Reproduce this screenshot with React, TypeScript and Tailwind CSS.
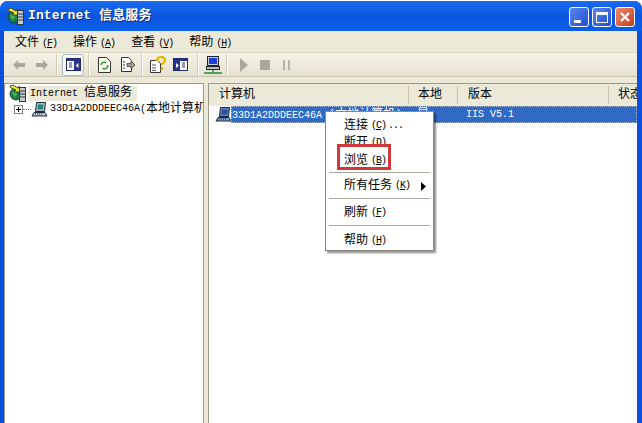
const cjk = "font-['Liberation_Mono','Noto_Sans_CJK_SC',monospace]"

const ServicesIcon = ({ size = 18 }: { size?: number }) => (
  <svg width={size} height={size} viewBox="0 0 18 18" className="shrink-0">
    <circle cx="7" cy="10" r="6" fill="#1f7d4a" stroke="#12331f" strokeWidth="0.8" />
    <path d="M3 8l4-1 1 4-3 2z" fill="#49b45c" />
    <path d="M1 2l3-1 5 3 1-2 1 6-6 0 2-2-5-2z" fill="#e6e832" stroke="#26301a" strokeWidth="0.8" />
    <rect x="10.500" y="3.500" width="6" height="14" fill="#c8ccd2" stroke="#30343c" />
    <path d="M11 7h5M11 10h5M11 13h5" stroke="#30343c" strokeWidth="1.200" />
  </svg>
)

const ComputerIcon = ({ selected }: { selected?: boolean }) => (
  <svg width="17" height="17" viewBox="0 0 17 17" className="shrink-0">
    <path d="M5.500 1.500h9l-1 9h-9z" fill={selected ? "#5f84c4" : "#b6bcc4"} stroke="#1a2438" />
    <path d="M7 3.500h5.500l-.6 5H6.500z" fill={selected ? "#2a4f9c" : "#1d8a7c"} />
    <path d="M3 11.500h11l2 3.500H1z" fill={selected ? "#7f9cd0" : "#c2c6cc"} stroke="#1a2438" />
    <path d="M4 13h8" stroke="#1a2438" strokeDasharray="1 1" />
  </svg>
)

const NetComputerIcon = () => (
  <svg width="20" height="20" viewBox="0 0 20 20" className="ml-[4px] shrink-0">
    <rect x="4.500" y="1.500" width="11" height="9" fill="#c8ccd4" stroke="#20242c" />
    <rect x="6" y="3" width="8" height="6" fill="#1f3fd8" />
    <rect x="3.500" y="11.500" width="13" height="3" fill="#b8bcc4" stroke="#20242c" />
    <path d="M10 15v3M1 18h18" stroke="#2a8a3c" strokeWidth="1.400" />
  </svg>
)

const ToolSep = ({ className }: { className: string }) => (
  <div className={`w-[2px] h-[22px] shrink-0 bg-[#d0ccb8] border-r border-white ${className}`} />
)

const Arrow = ({ left, className }: { left?: boolean; className?: string }) => (
  <svg width="14" height="12" viewBox="0 0 14 12" className={`shrink-0 ${left ? "" : "-scale-x-100"} ${className ?? ""}`}>
    <path d="M1 6l5-5v3h7v4H6v3z" fill="#a9a99a" />
  </svg>
)

const Hot = ({ k }: { k: string }) => (
  <span className="ml-[3px] text-[10px] tracking-[-1px]">(<u>{k}</u>)</span>
)

const MenuRow = ({ label, hot, extra }: { label: string; hot: string; extra?: string }) => (
  <div className="h-[17.5px] pl-[18px] flex items-center text-[12px] leading-none text-black">
    <span>{label}</span>
    <Hot k={hot} />
    {extra && <span className="ml-[2px] text-[10px] tracking-[-1px]">{extra}</span>}
  </div>
)

const MenuSep = ({ className }: { className: string }) => (
  <div className={`mx-[3px] h-[2px] bg-[#aca899] border-b border-white ${className}`} />
)

export default function App() {
  return (
    <div className={`relative w-[642px] h-[423px] overflow-hidden bg-white ${cjk}`}>
      <div className="h-full mt-px flex flex-col rounded-t-[8px] overflow-hidden bg-[#0b4fdc]">
        {/* title bar */}
        <div className="h-[30px] shrink-0 flex items-center px-[7px] bg-gradient-to-b from-[#1a6cf0] via-[#0a55e0] to-[#0b5fe8]">
          <ServicesIcon />
          <span className="ml-[3px] text-[13px] font-bold text-white tracking-[0.1px] [text-shadow:1px_1px_0_#0a2a80]">Internet 信息服务</span>
          <div className="ml-auto mt-[2px] flex gap-[3px]">
            <div className="w-[20px] h-[20px] rounded-[3px] border border-white bg-gradient-to-br from-[#5a86ee] to-[#1f4fd0] flex items-end pl-[4px] pb-[3px]">
              <div className="w-[7px] h-[3px] bg-white" />
            </div>
            <div className="w-[20px] h-[20px] rounded-[3px] border border-white bg-gradient-to-br from-[#5a86ee] to-[#1f4fd0] flex items-center justify-center">
              <div className="w-[12px] h-[11px] border border-white border-t-[3px]" />
            </div>
            <div className="w-[20px] h-[20px] rounded-[3px] border border-white bg-gradient-to-br from-[#ec8a6c] to-[#c63a1c] flex items-center justify-center">
              <svg width="12" height="12" viewBox="0 0 12 12"><path d="M2 2l8 8M10 2l-8 8" stroke="#fff" strokeWidth="2.2" /></svg>
            </div>
          </div>
        </div>

        <div className="flex-1 min-h-0 ml-[4px] mr-[5px] flex flex-col bg-[#ece9d8]">
          {/* menu bar */}
          <div className="h-[22px] shrink-0 flex items-center pt-[2px] pl-[11px] gap-[16px] text-[12px] text-black border-b border-[#d8d4c0]">
            <span>文件<Hot k="F" /></span>
            <span>操作<Hot k="A" /></span>
            <span>查看<Hot k="V" /></span>
            <span>帮助<Hot k="H" /></span>
          </div>

          {/* toolbar */}
          <div className="h-[24px] shrink-0 flex items-center pl-[8px] bg-gradient-to-b from-[#f5f3e8] to-[#e6e2d0] border-b border-[#c8c4b0]">
            <Arrow left />
            <Arrow className="ml-[9px]" />
            <ToolSep className="ml-[7px]" />
            <div className="ml-[4px] w-[22px] h-[22px] shrink-0 rounded-[3px] border border-[#b0b8c8] bg-[#f8f8f4] flex items-center justify-center">
              <svg width="15" height="13" viewBox="0 0 15 13"><rect x=".5" y=".5" width="14" height="12" fill="#fff" stroke="#1c2a6c" /><rect x="1" y="1" width="13" height="2" fill="#26348a" /><rect x="8" y="3" width="6" height="9" fill="#26348a" /><path d="M3 5h3M3 7h3M3 9h3" stroke="#26348a" /><path d="M12.500 5v5l-3-2.500z" fill="#fff" /></svg>
            </div>
            <ToolSep className="ml-[4px]" />
            <svg width="15" height="16" viewBox="0 0 15 16" className="ml-[7px] shrink-0"><path d="M1.500.5h8l4 4v11h-12z" fill="#fffff0" stroke="#333" /><path d="M4 8a3 3 0 0 1 5-2M10.500 8a3 3 0 0 1-5 3" fill="none" stroke="#2a9a3a" strokeWidth="1.500" /></svg>
            <svg width="16" height="16" viewBox="0 0 16 16" className="ml-[8px] shrink-0"><path d="M1.500.5h7l3 3v11h-10z" fill="#fff" stroke="#333" /><path d="M3 5h2M3 8h2M3 11h2" stroke="#333" /><path d="M7 6.500h4V4l4 4-4 4V9.500H7z" fill="#9a9a9a" stroke="#444" strokeWidth=".8" /></svg>
            <ToolSep className="ml-[5px]" />
            <svg width="18" height="18" viewBox="0 0 18 18" className="ml-[6px] shrink-0"><path d="M1.500 4.500h7l3 3v9h-10z" fill="#fff" stroke="#333" /><path d="M3 9h4M3 12h4M3 14.500h4" stroke="#555" /><path d="M8 5c0-5 8-5 8-1 0 3-3 2.500-3 5M13 11v3" fill="none" stroke="#e8b800" strokeWidth="2.400" /></svg>
            <svg width="15" height="13" viewBox="0 0 15 13" className="ml-[6px] shrink-0"><rect x=".5" y=".5" width="14" height="12" fill="#fff" stroke="#1c2a6c" /><rect x="1" y="1" width="13" height="2" fill="#26348a" /><rect x="1" y="3" width="6" height="9" fill="#26348a" /><path d="M9 5h3M9 7h3M9 9h3" stroke="#26348a" /><path d="M3 5v5l3-2.500z" fill="#fff" /></svg>
            <ToolSep className="ml-[9px]" />
            <NetComputerIcon />
            <ToolSep className="ml-[3px]" />
            <svg width="8" height="14" viewBox="0 0 8 14" className="ml-[12px] shrink-0"><path d="M0 0l8 7-8 7z" fill="#a9a99a" /></svg>
            <div className="ml-[12px] w-[10px] h-[10px] shrink-0 bg-[#a9a99a]" />
            <div className="ml-[13px] flex gap-[3px]"><div className="w-[2px] h-[10px] bg-[#b5b5a5]" /><div className="w-[2px] h-[10px] bg-[#b5b5a5]" /></div>
          </div>

          {/* panes */}
          <div className="flex-1 min-h-0 flex pt-[6px]">
            <div className="w-[200px] shrink-0 bg-white border-l border-t border-r border-[#9a9a8c] pt-px overflow-hidden">
              <div className="flex items-center h-[16px] pl-[4px]">
                <ServicesIcon />
                <span className="ml-px px-[2px] bg-[#ece9d8] text-[12px] leading-[15px] whitespace-nowrap"><span className="text-[10px]">Internet </span>信息服务<span className="inline-block w-[3px]" /></span>
              </div>
              <div className="flex items-center h-[16px] pl-[9px] whitespace-nowrap">
                <div className="w-[9px] h-[9px] shrink-0 border border-[#808080] bg-white flex items-center justify-center">
                  <svg width="7" height="7" viewBox="0 0 7 7"><path d="M1 3.500h5M3.500 1v5" stroke="#000" /></svg>
                </div>
                <div className="w-[8px] shrink-0 border-t border-dotted border-[#808080]" />
                <ComputerIcon />
                <span className="ml-[2px] shrink-0 text-[10px] leading-none">33D1A2DDDEEC46A</span>
                <span className="shrink-0 text-[12px] leading-none"><span className="text-[10px]">(</span>本地计算机</span>
              </div>
            </div>
            <div className="w-[4px] shrink-0 bg-[#ece9d8]" />
            <div className="flex-1 min-w-0 relative bg-white border-l border-t border-[#9a9a8c] overflow-hidden">
              <div className="h-[22px] flex items-center text-[12px] bg-[#ece9d8] whitespace-nowrap">
                <div className="w-[200px] shrink-0 pl-[10px] border-r border-[#c8c4b0]">计算机</div>
                <div className="w-[49px] shrink-0 pl-[9px] border-r border-[#c8c4b0]">本地</div>
                <div className="w-[151px] shrink-0 pl-[10px] border-r border-[#c8c4b0]">版本</div>
                <div className="pl-[9px]">状态</div>
              </div>
              <div className="flex items-center h-[17px] pl-[6px] whitespace-nowrap">
                <ComputerIcon selected />
                <div className="flex-1 h-[17px] -ml-px flex items-center bg-[#316ac5] text-white border border-dotted border-[#a8bde0] text-[10px] leading-none">
                  <span className="w-[185px] shrink-0">33D1A2DDDEEC46A <span className="text-[12px]">(本地计算机)</span></span>
                  <span className="w-[49px] shrink-0 text-[12px]">是</span>
                  <span>IIS V5.1</span>
                </div>
              </div>
            </div>
          </div>
        </div>
      </div>

      {/* context menu */}
      <div className="absolute left-[325px] top-[111px] w-[109px] h-[140px] bg-white border border-[#8a8a80] shadow-[2px_2px_2px_rgba(0,0,0,0.45)] pt-[5px]">
        <MenuRow label="连接" hot="C" extra="..." />
        <MenuRow label="断开" hot="D" />
        <MenuRow label="浏览" hot="B" />
        <MenuSep className="mt-[2px] mb-[4px]" />
        <div className="flex items-center pr-[7px]">
          <MenuRow label="所有任务" hot="K" />
          <svg width="5" height="9" viewBox="0 0 5 9" className="ml-auto"><path d="M0 0l5 4.500L0 9z" fill="#000" /></svg>
        </div>
        <MenuSep className="mt-[3px] mb-[4px]" />
        <MenuRow label="刷新" hot="F" />
        <MenuSep className="mt-[3px] mb-[6px]" />
        <MenuRow label="帮助" hot="H" />
      </div>
      {/* annotation box */}
      <div className="absolute left-[337px] top-[144px] w-[54px] h-[26px] border-[3px] border-[#d0393c]" />
    </div>
  )
}
